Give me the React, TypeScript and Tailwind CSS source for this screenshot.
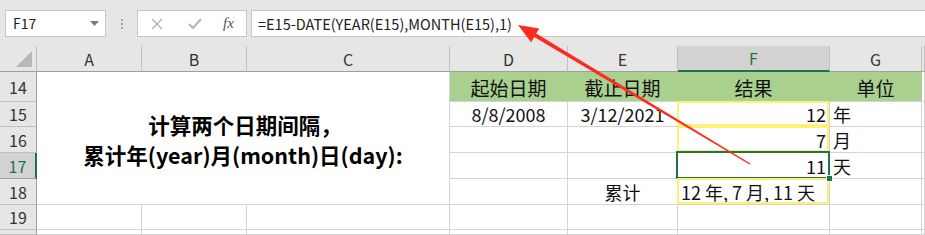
import React from "react";

const FONT = { fontFamily: '"Noto Sans CJK SC", "Noto Sans", sans-serif' };

type Cell = {
  text?: string;
  align?: "left" | "center" | "right";
  mark?: "yellow" | "active";
};

const colLetters = ["A", "B", "C", "D", "E", "F", "G", ""];

// rows 15..20 (row 14 handled with merged block)
const rows: { n: string; cells: Record<string, Cell> }[] = [
  {
    n: "15",
    cells: {
      D: { text: "8/8/2008", align: "center" },
      E: { text: "3/12/2021", align: "center" },
      F: { text: "12", align: "right", mark: "yellow" },
      G: { text: "年", align: "left" },
    },
  },
  {
    n: "16",
    cells: {
      F: { text: "7", align: "right", mark: "yellow" },
      G: { text: "月", align: "left" },
    },
  },
  {
    n: "17",
    cells: {
      F: { text: "11", align: "right", mark: "active" },
      G: { text: "天", align: "left" },
    },
  },
  {
    n: "18",
    cells: {
      E: { text: "累计", align: "center" },
      F: { text: "12 年, 7 月, 11 天", align: "left", mark: "yellow" },
    },
  },
  { n: "19", cells: {} },
  { n: "", cells: {} },
];

function DataCell({ c }: { c?: Cell }) {
  const align =
    c?.align === "right" ? "justify-end pr-[3px]" : c?.align === "left" ? "justify-start pl-[3px]" : "justify-center";
  return (
    <div
      className={`relative flex items-center border-r border-b border-[#d4d4d4] bg-white text-[18px] text-[#111] ${align}`}
    >
      <span className="leading-none">{c?.text}</span>
      {c?.mark === "yellow" && (
        <div className="pointer-events-none absolute -left-px -top-px right-0 bottom-0 border-2 border-[#fff176]" />
      )}
      {c?.mark === "active" && (
        <>
          <div className="pointer-events-none absolute -left-[2px] -top-[2px] -right-px -bottom-px border-2 border-[#217346]" />
          <div className="absolute -right-[4px] -bottom-[4px] z-10 h-[7px] w-[7px] border border-white bg-[#217346]" />
        </>
      )}
    </div>
  );
}

function GreenCell({ text }: { text: string }) {
  return (
    <div className="flex items-center justify-center border-r border-b border-r-[#a9d08e] border-b-[#d4d4d4] bg-[#a9d08e] pt-[2px] text-[19px] text-[#111]">
      <span className="leading-none">{text}</span>
    </div>
  );
}

function RowHead({ n, active }: { n: string; active?: boolean }) {
  return (
    <div
      className={`flex items-center justify-center border-b text-[16px] ${
        active
          ? "bg-[#d2d2d2] text-[#217346] border-r-2 border-r-[#217346] border-b-[#9f9f9f]"
          : "bg-[#e6e6e6] text-[#333] border-r border-r-[#9f9f9f] border-b-[#c0c0c0]"
      }`}
    >
      {n}
    </div>
  );
}

export default function App() {
  return (
    <div className="relative h-[235px] w-[925px] overflow-hidden bg-white" style={FONT}>
      {/* formula bar */}
      <div className="flex h-[46px] items-center bg-[#e6e6e6] pt-[1px]">
        <div className="ml-[5px] flex h-[27px] w-[101px] items-center justify-between border border-[#c6c6c6] bg-white pl-[7px] pr-[6px] text-[14px] text-[#222]">
          <span>F17</span>
          <svg width="9" height="5" viewBox="0 0 9 5">
            <path d="M0 0h9L4.5 5z" fill="#7a7a7a" />
          </svg>
        </div>
        <div className="ml-[15px] flex flex-col gap-[2px]">
          <span className="h-[2px] w-[2px] bg-[#a8a8a8]" />
          <span className="h-[2px] w-[2px] bg-[#a8a8a8]" />
          <span className="h-[2px] w-[2px] bg-[#a8a8a8]" />
        </div>
        <div className="ml-[14px] flex h-[27px] w-[110px] items-center border border-[#c6c6c6] bg-white">
          <svg className="ml-[13px]" width="12" height="12" viewBox="0 0 12 12">
            <path d="M1 1l10 10M11 1L1 11" stroke="#b4b4b4" strokeWidth="1.4" />
          </svg>
          <svg className="ml-[25px]" width="14" height="11" viewBox="0 0 14 11">
            <path d="M1 6l4 4 8-9" stroke="#b4b4b4" strokeWidth="2" fill="none" />
          </svg>
          <span
            className="ml-[21px] text-[15px] italic text-[#555]"
            style={{ fontFamily: '"Liberation Serif", serif' }}
          >
            fx
          </span>
        </div>
        <div className="ml-[4px] flex h-[27px] flex-1 items-center border border-r-0 border-[#c6c6c6] bg-white pl-[6px] text-[14.5px] text-[#222]">
          =E15-DATE(YEAR(E15),MONTH(E15),1)
        </div>
      </div>

      {/* sheet */}
      <div className="grid grid-cols-[37px_105px_105px_203px_118px_110px_152px_92px_1fr] grid-rows-[26px_30px_25px_26px_26px_26px_25px_1fr] h-[189px]">
        {/* column headers */}
        <div className="relative border-r border-b border-r-[#c0c0c0] border-b-[#9f9f9f] bg-[#e6e6e6]">
          <svg className="absolute right-[4px] bottom-[4px]" width="16" height="16" viewBox="0 0 16 16">
            <path d="M16 0V16H0z" fill="#b8b8b8" />
          </svg>
        </div>
        {colLetters.map((l, i) =>
          l === "F" ? (
            <div
              key={i}
              className="flex items-center justify-center border-r border-b-2 border-r-[#c0c0c0] border-b-[#217346] bg-[#d2d2d2] text-[16px] text-[#217346]"
            >
              {l}
            </div>
          ) : (
            <div
              key={i}
              className="flex items-center justify-center border-r border-b border-r-[#c0c0c0] border-b-[#9f9f9f] bg-[#e6e6e6] text-[16px] text-[#333]"
            >
              {l}
            </div>
          )
        )}

        {/* row 14 */}
        <RowHead n="14" />
        <div className="col-span-3 row-span-5 flex flex-col items-center justify-center border-r border-b border-[#d4d4d4] bg-white pt-[3px] text-[21.5px] font-bold leading-[30px] text-black">
          <span className="pl-[4px]">计算两个日期间隔，</span>
          <span>累计年(year)月(month)日(day):</span>
        </div>
        <GreenCell text="起始日期" />
        <GreenCell text="截止日期" />
        <GreenCell text="结果" />
        <GreenCell text="单位" />
        <DataCell />

        {rows.map((r, ri) => (
          <React.Fragment key={ri}>
            <RowHead n={r.n} active={r.n === "17"} />
            {(ri >= 4 ? ["A", "B", "C"] : []).map((l) => (
              <DataCell key={l} />
            ))}
            {["D", "E", "F", "G", "H"].map((l) => (
              <DataCell key={l} c={r.cells[l]} />
            ))}
          </React.Fragment>
        ))}
      </div>

      {/* red arrow */}
      <svg className="pointer-events-none absolute left-0 top-0" width="925" height="235">
        <polygon
          points="518,25 539.3,28.4 536.2,33.6 750.4,163.4 749.6,164.6 534.2,37 531.1,42.2"
          fill="#fe2a1f"
        />
      </svg>
    </div>
  );
}
